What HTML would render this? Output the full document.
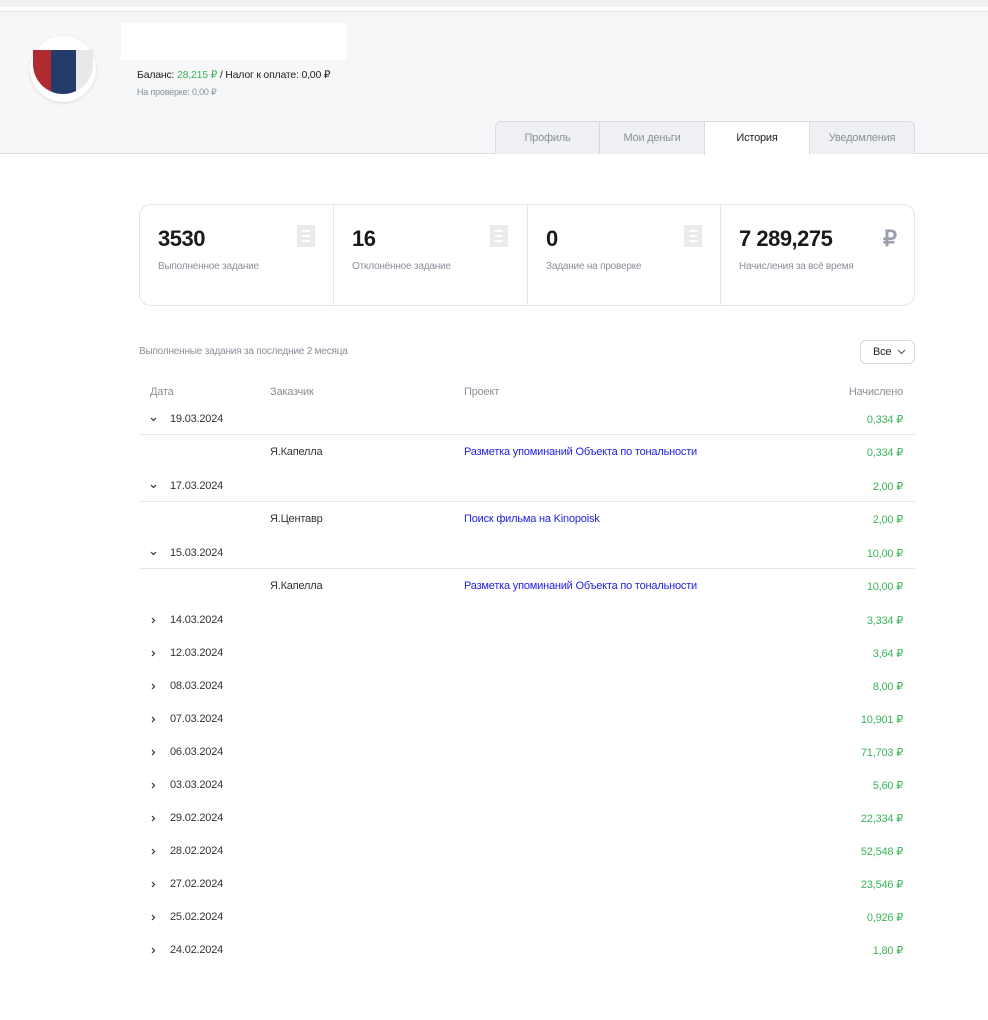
<!DOCTYPE html>
<html><head><meta charset="utf-8"><style>
*{margin:0;padding:0;box-sizing:border-box}
body{width:988px;height:1020px;background:#fff;font-family:"Liberation Sans",sans-serif;position:relative;overflow:hidden;color:#222;letter-spacing:-0.2px}
.abs{position:absolute}
.top{left:0;top:0;width:988px;height:7px;background:#f0f0f0}
.hdr{left:0;top:11px;width:988px;height:143px;background:#f6f7f9;border-top:1px solid #e2e3e6;border-bottom:1px solid #dcdde1}
.tab{top:121px;height:33px;background:#eef0f3;border:1px solid #d8dadf;border-bottom:none;font-size:11px;color:#8a8f9a;text-align:center;line-height:33px}
.card{left:139px;top:204px;width:776px;height:102px;border:1px solid #e3e5ea;border-radius:12px}
.cell{top:0;height:100px}
.num{font-size:22px;font-weight:bold;color:#1a1a1a;position:absolute;left:18px;top:21px;letter-spacing:-0.5px}
.lbl{font-size:10px;color:#8a8f9a;position:absolute;left:18px;top:56px}
.ico{position:absolute;top:20px;width:18px;height:22px;background:#ebebeb}
.ico i{position:absolute;left:5px;width:8px;height:2px;background:#fff}
.row{left:139px;width:776px;height:33px;font-size:11px;color:#333}
.row span{position:absolute;top:11px}
.amt{right:12px;color:#3cb45a}
.ln{border-bottom:1px solid #e6e7ea}
.chev{left:11px;top:12px!important;width:7px;height:7px}
</style></head><body>
<div class="abs top"></div>
<div class="abs hdr"></div>
<div class="abs" style="left:30px;top:36px;width:66px;height:66px;border-radius:50%;background:#fff;box-shadow:0 1px 3px rgba(0,0,0,.12)"></div>
<div class="abs" style="left:33px;top:50px;width:60px;height:44px;border-radius:0 0 30px 30px;overflow:hidden;background:linear-gradient(90deg,#b02a30 0 30%,#243b6b 30% 72%,#e8e8e8 72%)"></div>
<div class="abs" style="left:121px;top:23px;width:225px;height:37px;background:#fff"></div>
<div class="abs" style="left:137px;top:69px;font-size:10.5px;color:#222">Баланс: <span style="color:#3cb45a">28,215 ₽</span> / Налог к оплате: 0,00 ₽</div>
<div class="abs" style="left:137px;top:87px;font-size:9px;color:#8a8f9a">На проверке: 0,00 ₽</div>
<div class="abs tab" style="left:495px;width:105px;border-radius:6px 0 0 0">Профиль</div>
<div class="abs tab" style="left:599px;width:106px">Мои деньги</div>
<div class="abs tab" style="left:704px;width:106px;background:#fff;color:#222;height:34px">История</div>
<div class="abs tab" style="left:809px;width:106px;border-radius:0 6px 0 0">Уведомления</div>
<div class="abs card">
 <div class="abs cell" style="left:0;width:194px;border-right:1px solid #e3e5ea"><div class="num">3530</div><div class="lbl">Выполненное задание</div><div class="ico" style="left:157px"><i style="top:5px"></i><i style="top:10px"></i><i style="top:15px"></i></div></div>
 <div class="abs cell" style="left:194px;width:194px;border-right:1px solid #e3e5ea"><div class="num">16</div><div class="lbl">Отклонённое задание</div><div class="ico" style="left:156px"><i style="top:5px"></i><i style="top:10px"></i><i style="top:15px"></i></div></div>
 <div class="abs cell" style="left:388px;width:193px;border-right:1px solid #e3e5ea"><div class="num">0</div><div class="lbl">Задание на проверке</div><div class="ico" style="left:156px"><i style="top:5px"></i><i style="top:10px"></i><i style="top:15px"></i></div></div>
 <div class="abs cell" style="left:581px;width:194px"><div class="num">7 289,275</div><div class="lbl">Начисления за всё время</div><div style="position:absolute;left:162px;top:21px;font-size:22px;font-weight:bold;color:#9a9fab">₽</div></div>
</div>
<div class="abs" style="left:139px;top:346px;font-size:10px;color:#8a8f9a">Выполненные задания за последние 2 месяца</div>
<div class="abs" style="left:860px;top:340px;width:55px;height:24px;border:1px solid #d8dadf;border-radius:6px;font-size:11px;line-height:22px;padding-left:12px;color:#222">Все <svg width="9" height="6" style="margin-left:3px" viewBox="0 0 9 6"><path d="M1 1l3.5 3.5L8 1" fill="none" stroke="#555" stroke-width="1"/></svg></div>
<div class="abs row" style="top:375px;color:#8a8f9a"><span style="left:11px">Дата</span><span style="left:131px">Заказчик</span><span style="left:325px">Проект</span><span style="right:12px">Начислено</span></div>
<div id="rows"></div>
<script>
const D=[["d","19.03.2024","0,334 ₽",1],["i","Я.Капелла","Разметка упоминаний Объекта по тональности","0,334 ₽"],["d","17.03.2024","2,00 ₽",1],["i","Я.Центавр","Поиск фильма на Kinopoisk","2,00 ₽"],["d","15.03.2024","10,00 ₽",1],["i","Я.Капелла","Разметка упоминаний Объекта по тональности","10,00 ₽"],
["d","14.03.2024","3,334 ₽"],["d","12.03.2024","3,64 ₽"],["d","08.03.2024","8,00 ₽"],["d","07.03.2024","10,901 ₽"],["d","06.03.2024","71,703 ₽"],["d","03.03.2024","5,60 ₽"],["d","29.02.2024","22,334 ₽"],["d","28.02.2024","52,548 ₽"],["d","27.02.2024","23,546 ₽"],["d","25.02.2024","0,926 ₽"],["d","24.02.2024","1,80 ₽"]];
let h="",y=402;
for(const r of D){
 if(r[0]=="d"){
  const dn='<path d="M1 2l2.5 2.5L6 2" fill="none" stroke="#333" stroke-width="1.2"/>',rt='<path d="M2 1l2.5 2.5L2 6" fill="none" stroke="#333" stroke-width="1.2"/>';
  h+=`<div class="abs row ${r[3]?'ln':''}" style="top:${y}px"><span class="chev"><svg width="7" height="7" viewBox="0 0 7 7">${r[3]?dn:rt}</svg></span><span style="left:31px">${r[1]}</span><span class="amt">${r[2]}</span></div>`;
 }else{
  h+=`<div class="abs row" style="top:${y}px"><span style="left:131px">${r[1]}</span><span style="left:325px;color:#2222dd">${r[2]}</span><span class="amt">${r[3]}</span></div>`;
 }
 y+= (r[0]=="i"?34:33);
}
document.getElementById("rows").innerHTML=h;
</script>
</body></html>
